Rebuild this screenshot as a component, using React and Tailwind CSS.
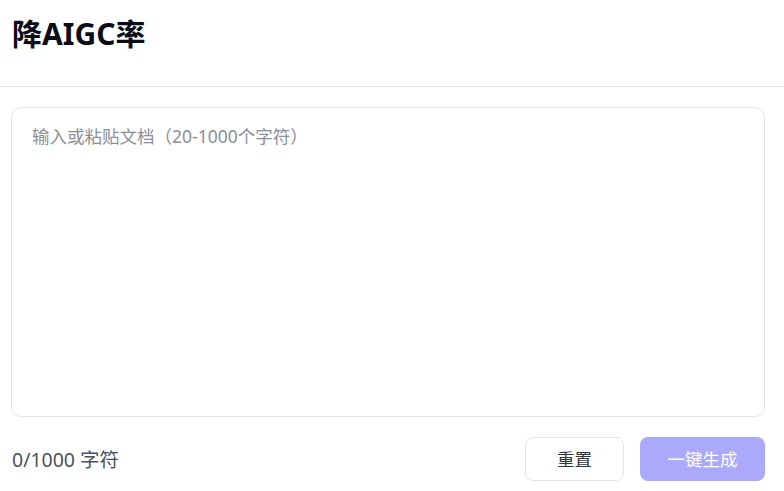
export default function App() {
  return (
    <div
      className="w-[784px] h-[491px] bg-white overflow-hidden"
      style={{ fontFamily: '"Noto Sans", "Noto Sans CJK SC", sans-serif' }}
    >
      <div className="h-[87px] border-b border-[#e8e8ec] flex items-center pl-[12px]">
        <h1 className="text-[30px] font-bold text-[#0b0b1a] leading-none -mt-[18px]">降AIGC率</h1>
      </div>
      <div className="pl-[11px] pr-[19px] pt-[20px]">
        <div className="h-[310px] border border-[#e5e6eb] rounded-[10px] px-[20px] pt-[14px]">
          <div className="text-[17.5px] text-[#8a8f99] leading-[28px]">输入或粘贴文档（20-1000个字符）</div>
        </div>
        <div className="mt-[20px] flex items-center justify-between">
          <div className="text-[19.5px] text-[#4b5160] pl-[1px] pt-[1px]">0/1000 字符</div>
          <div className="flex items-center gap-[16px]">
            <button className="w-[99px] h-[44px] rounded-[8px] border border-[#e4e6eb] bg-white text-[17.5px] text-[#33363d]">
              重置
            </button>
            <button className="w-[125px] h-[44px] rounded-[8px] bg-[#abaafa] text-[17.5px] text-white">
              一键生成
            </button>
          </div>
        </div>
      </div>
    </div>
  );
}
